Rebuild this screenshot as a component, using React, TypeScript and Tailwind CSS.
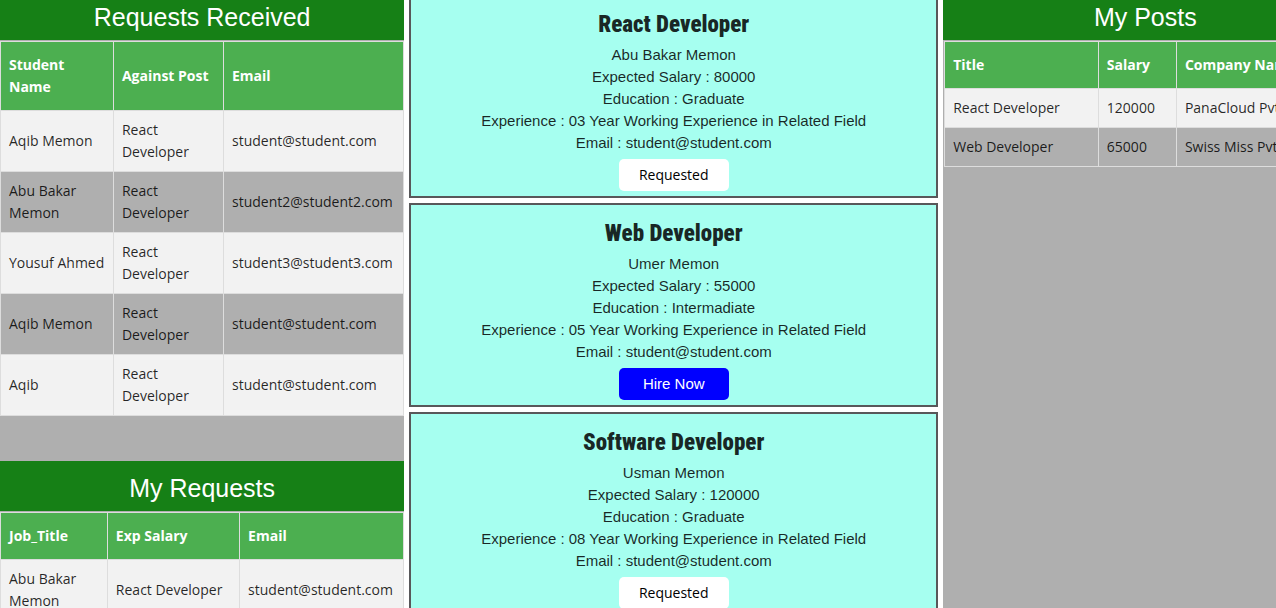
type TableProps = {
  headings: string[];
  rows: string[][];
  widths: string[];
};

type Candidate = {
  title: string;
  name: string;
  salary: string;
  education: string;
  experience: string;
  email: string;
  requested: boolean;
};

const received = [
  ["Aqib Memon", "React Developer", "student@student.com"],
  ["Abu Bakar Memon", "React Developer", "student2@student2.com"],
  ["Yousuf Ahmed", "React Developer", "student3@student3.com"],
  ["Aqib Memon", "React Developer", "student@student.com"],
  ["Aqib", "React Developer", "student@student.com"],
];

const myRequests = [["Abu Bakar Memon", "React Developer", "student@student.com"]];

const posts = [
  ["React Developer", "120000", "PanaCloud Pvt Ltd"],
  ["Web Developer", "65000", "Swiss Miss Pvt Ltd"],
];

const candidates: Candidate[] = [
  {
    title: "React Developer",
    name: "Abu Bakar Memon",
    salary: "80000",
    education: "Graduate",
    experience: "03 Year Working Experience in Related Field",
    email: "student@student.com",
    requested: true,
  },
  {
    title: "Web Developer",
    name: "Umer Memon",
    salary: "55000",
    education: "Intermadiate",
    experience: "05 Year Working Experience in Related Field",
    email: "student@student.com",
    requested: false,
  },
  {
    title: "Software Developer",
    name: "Usman Memon",
    salary: "120000",
    education: "Graduate",
    experience: "08 Year Working Experience in Related Field",
    email: "student@student.com",
    requested: true,
  },
];

function PanelTitle({ children }: { children: string }) {
  return (
    <h2 className="mb-px bg-[#168016] pt-2 pb-1 text-center text-[25px] leading-[38px] text-white">
      {children}
    </h2>
  );
}

function DataTable({ headings, rows, widths }: TableProps) {
  return (
    <table className="w-full table-fixed border-collapse font-['Trebuchet_MS','Open_Sans',sans-serif] text-[14px] leading-[22px] text-black/85">
      <colgroup>
        {widths.map((width, i) => (
          <col key={i} className={width} />
        ))}
      </colgroup>
      <thead>
        <tr className="bg-[#4caf50] text-left text-white">
          {headings.map((heading) => (
            <th key={heading} className="border border-[#ddd] px-2 py-3 font-bold">
              {heading}
            </th>
          ))}
        </tr>
      </thead>
      <tbody>
        {rows.map((row, i) => (
          <tr key={i} className="odd:bg-[#f2f2f2]">
            {row.map((cell, j) => (
              <td key={j} className="border border-[#ddd] p-2">
                {cell}
              </td>
            ))}
          </tr>
        ))}
      </tbody>
    </table>
  );
}

function CandidateCard({ candidate }: { candidate: Candidate }) {
  return (
    <article className="flex flex-col items-center border-2 border-[#58585a] bg-[#a6fff0] pt-2.5 pb-[5px] text-center text-[15px] leading-[22px] text-black/85">
      <h3 className="font-[Impact,'Roboto_Condensed',Roboto,sans-serif] text-[23px] leading-[38px] font-black">
        {candidate.title}
      </h3>
      <p>{candidate.name}</p>
      <p>Expected Salary : {candidate.salary}</p>
      <p>Education : {candidate.education}</p>
      <p>Experience : {candidate.experience}</p>
      <p>Email : {candidate.email}</p>
      {candidate.requested ? (
        <button
          type="button"
          className="mt-[5px] h-8 w-[110px] rounded-[5px] bg-white font-['Segoe_UI','Open_Sans',sans-serif] text-[14px] text-black"
        >
          Requested
        </button>
      ) : (
        <button
          type="button"
          className="mt-[5px] h-8 w-[110px] rounded-[5px] bg-[#0000ff] text-[15px] text-white"
        >
          Hire Now
        </button>
      )}
    </article>
  );
}

export default function App() {
  return (
    <main className="h-screen overflow-hidden bg-white font-['Liberation_Sans',Arial,sans-serif]">
      <div className="grid h-full w-[105.6%] grid-cols-[minmax(0,3fr)_minmax(0,4fr)_minmax(0,3fr)]">
        <div className="h-full overflow-hidden bg-[#afafaf]">
          <section className="-mt-2.5 mb-[45px]">
            <PanelTitle>Requests Received</PanelTitle>
            <DataTable
              headings={["Student Name", "Against Post", "Email"]}
              rows={received}
              widths={["w-[28%]", "w-[27.3%]", "w-[44.7%]"]}
            />
          </section>
          <section>
            <PanelTitle>My Requests</PanelTitle>
            <DataTable
              headings={["Job_Title", "Exp Salary", "Email"]}
              rows={myRequests}
              widths={["w-[26.5%]", "w-[32.8%]", "w-[40.7%]"]}
            />
          </section>
        </div>
        <div className="h-full overflow-hidden">
          <div className="-mt-1.5 flex flex-col gap-[5px] px-[5px]">
            {candidates.map((candidate) => (
              <CandidateCard key={candidate.title} candidate={candidate} />
            ))}
          </div>
        </div>
        <section className="h-full overflow-hidden bg-[#afafaf]">
          <div className="-mt-2.5">
            <PanelTitle>My Posts</PanelTitle>
            <div className="pl-px">
              <DataTable
                headings={["Title", "Salary", "Company Name"]}
                rows={posts}
                widths={["w-[38.2%]", "w-[19.4%]", "w-[42.4%]"]}
              />
            </div>
          </div>
        </section>
      </div>
    </main>
  );
}
